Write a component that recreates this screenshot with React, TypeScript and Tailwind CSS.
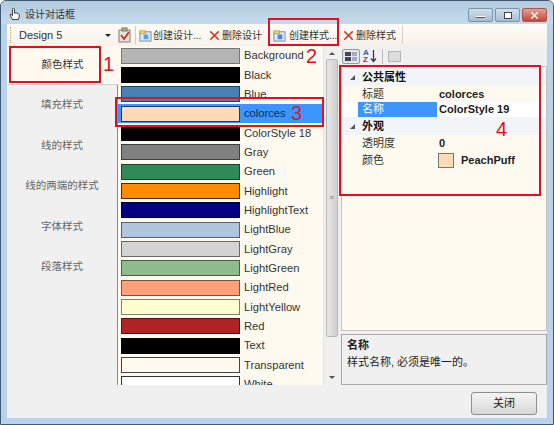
import React from 'react';
import { X } from 'lucide-react';

const font = { cjk: "font-['Liberation_Sans','Noto_Sans_CJK_SC',sans-serif]" };

const colors = [
  { name: 'Background', fill: 'bg-[#b5b5b5]', border: 'border-[#777]' },
  { name: 'Black', fill: 'bg-black', border: 'border-black' },
  { name: 'Blue', fill: 'bg-[#4682b4]', border: 'border-[#22425c]' },
  { name: 'colorces', fill: 'bg-[#ffdab9]', border: 'border-[#1c3c66]', selected: true },
  { name: 'ColorStyle 18', fill: 'bg-black', border: 'border-black' },
  { name: 'Gray', fill: 'bg-[#808080]', border: 'border-[#404040]' },
  { name: 'Green', fill: 'bg-[#2e8b57]', border: 'border-[#17452b]' },
  { name: 'Highlight', fill: 'bg-[#ff8c00]', border: 'border-[#4a2c08]' },
  { name: 'HighlightText', fill: 'bg-[#000080]', border: 'border-[#000040]' },
  { name: 'LightBlue', fill: 'bg-[#b0c4de]', border: 'border-[#58626f]' },
  { name: 'LightGray', fill: 'bg-[#d3d3d3]', border: 'border-[#6a6a6a]' },
  { name: 'LightGreen', fill: 'bg-[#8fbc8f]', border: 'border-[#485e48]' },
  { name: 'LightRed', fill: 'bg-[#ffa07a]', border: 'border-[#80503d]' },
  { name: 'LightYellow', fill: 'bg-[#ffffd0]', border: 'border-[#807f68]' },
  { name: 'Red', fill: 'bg-[#b22222]', border: 'border-[#591111]' },
  { name: 'Text', fill: 'bg-black', border: 'border-black' },
  { name: 'Transparent', fill: 'bg-[#fffaf0]', border: 'border-[#444]' },
  { name: 'White', fill: 'bg-white', border: 'border-[#333]' },
];

const tabs = ['填充样式', '线的样式', '线的两端的样式', '字体样式', '段落样式'];

const HandIcon = () => (
  <svg width="12" height="14" viewBox="0 0 14 15" fill="#fff" stroke="#222" strokeWidth="1">
    <path d="M4 14 L1.5 9 Q1 7.5 2.5 7.8 L4 9.5 V2.5 Q4 1 5.2 1 Q6.4 1 6.4 2.5 V6.5 Q8.5 5.8 11 7 Q12.5 7.8 12 10 L11 14 Z" />
  </svg>
);

const ClipboardIcon = () => (
  <svg width="15" height="16" viewBox="0 0 15 16">
    <rect x="2" y="3" width="11" height="12" fill="#e9e4da" stroke="#8a7f70" />
    <rect x="5" y="1" width="5" height="3" fill="#b9b2a4" stroke="#77705f" />
    <path d="M4 8 L7 12 L12 5" fill="none" stroke="#c8342c" strokeWidth="1.8" />
  </svg>
);

const NewDocIcon = ({ accent }: { accent: string }) => (
  <svg width="13" height="13" viewBox="0 0 14 14">
    <rect x="1" y="3" width="12" height="10" fill="#dbe9f6" stroke="#6a8fb2" />
    <rect x="1" y="2" width="6" height="3" fill="#f1d67a" stroke="#c1a246" />
    <rect x="5" y="6" width="5" height="5" fill={accent} />
  </svg>
);

const DeleteIcon = () => <X size={15} strokeWidth={2.6} className="text-[#e0301e] shrink-0" />;

const Divider = () => <div className="w-px h-[18px] bg-[#d3cfc6]" />;

const Arrow = ({ className }: { className: string }) => (
  <svg width="7" height="7" viewBox="0 0 7 7" className={className}>
    <path d="M6 1 V6 H1 Z" fill="#555" />
  </svg>
);

const App: React.FC = () => {
  return (
    <div className={`relative w-[554px] h-[425px] overflow-hidden bg-[#b9d4ea] border border-[#3f5a72] rounded-t-md flex flex-col ${font.cjk}`}>
      {/* Title bar */}
      <div className="h-[23px] shrink-0 flex items-center justify-between pl-[8px] pr-[6px] bg-gradient-to-b from-[#b4c9dc] to-[#c4dbee]">
        <div className="flex items-center gap-[4px] text-[10px] text-[#333] pt-[3px]">
          <HandIcon />
          <span>设计对话框</span>
        </div>
        <div className="flex self-start gap-px">
          <div className="w-[25px] h-[14px] mt-[7px] rounded-[2px] border border-[#7d93a8] bg-gradient-to-b from-[#d2e0ec] to-[#a8bdd0] flex items-end justify-center pb-[3px]">
            <div className="w-[9px] h-[2px] bg-white border-b border-[#556]" />
          </div>
          <div className="w-[25px] h-[14px] mt-[7px] ml-[1px] rounded-[2px] border border-[#7d93a8] bg-gradient-to-b from-[#d2e0ec] to-[#a8bdd0] flex items-center justify-center">
            <div className="w-[8px] h-[7px] border border-[#445] bg-white" />
          </div>
          <div className="w-[25px] h-[14px] mt-[7px] ml-[1px] rounded-[2px] border border-[#a05a50] bg-gradient-to-b from-[#e0a094] to-[#c2473a] flex items-center justify-center">
            <X size={11} strokeWidth={3} className="text-white" />
          </div>
        </div>
      </div>

      <div className="flex-1 mx-[6px] mb-[6px] bg-[#f0f0f0] flex flex-col min-h-0">
        {/* Toolbar */}
        <div className="h-[22px] shrink-0 flex items-center bg-gradient-to-b from-[#fefcf8] to-[#f6f2ea] text-[10px] text-[#333]">
          <div className="w-[3px] h-[16px] ml-[3px] border-l border-dotted border-[#c9a46a]" />
          <div className="w-[99px] flex items-center justify-between pl-[6px] pr-px text-[11px]">
            <span>Design 5</span>
            <span className="w-0 h-0 border-x-[3px] border-x-transparent border-t-[3px] border-t-[#222]" />
          </div>
          <div className="ml-[5px]"><ClipboardIcon /></div>
          <div className="ml-[3px] mr-[3px]"><Divider /></div>
          <div className="flex items-center gap-[1px] w-[68px]">
            <NewDocIcon accent="#5fa0d8" />
            <span className="whitespace-nowrap">创建设计...</span>
          </div>
          <div className="flex items-center w-[66px]">
            <DeleteIcon />
            <span className="whitespace-nowrap">删除设计</span>
          </div>
          <div className="flex items-center gap-[3px] w-[68px]">
            <NewDocIcon accent="#4b86c8" />
            <span className="whitespace-nowrap">创建样式...</span>
          </div>
          <div className="flex items-center w-[61px]">
            <DeleteIcon />
            <span className="whitespace-nowrap">删除样式</span>
          </div>
          <Divider />
        </div>

        <div className="flex h-[339px] shrink-0">
          {/* Left tabs */}
          <div className="w-[111px] shrink-0 flex flex-col text-[10.5px] text-[#666]">
            <div className="h-[39px] shrink-0 flex items-center justify-center bg-[#fffaf0] text-[#333] border-b border-[#d0d0d0]">颜色样式</div>
            {tabs.map((t) => (
              <div key={t} className="h-[40.5px] shrink-0 flex items-center justify-center border-r border-[#8a8a8a]">{t}</div>
            ))}
            <div className="flex-1 border-r border-[#8a8a8a]" />
          </div>

          {/* Color list + scrollbar */}
          <div className="w-[221px] shrink-0 flex bg-[#fffaf0] overflow-hidden">
            <div className="w-[205px] shrink-0 flex flex-col overflow-hidden pl-[3px]">
              {colors.map((c) => (
                <div key={c.name} className={`h-[19.33px] shrink-0 flex items-center gap-[4px] text-[11.2px] ${c.selected ? 'bg-[#3d95ff] -ml-[3px] pl-[3px] text-[#0c2a55]' : 'text-[#333]'}`}>
                  <div className={`w-[119px] h-[16px] shrink-0 border ${c.fill} ${c.border}`} />
                  <span className="whitespace-nowrap">{c.name}</span>
                </div>
              ))}
            </div>
            <div className="flex-1 bg-[#f0f0f0] flex flex-col items-center py-[3px] border-l border-[#e4e4e4]">
              <span className="w-0 h-0 border-x-[3px] border-x-transparent border-b-[3px] border-b-[#555] mt-[3px]" />
              <div className="w-[12px] h-[278px] mt-[4px] rounded-[2px] bg-gradient-to-r from-[#e6e6e6] to-[#cfcfcf] border border-[#b8b8b8] flex items-center justify-center text-[7px] text-[#777]">≡</div>
              <span className="w-0 h-0 border-x-[3px] border-x-transparent border-t-[3px] border-t-[#555] mt-auto mb-[3px]" />
            </div>
          </div>

          {/* Right: property grid */}
          <div className="flex-1 flex flex-col ml-[2px] min-w-0">
            <div className="h-[20px] shrink-0 flex items-center gap-[3px] pl-[1px]">
              <div className="w-[18px] h-[15px] rounded-[2px] border border-[#9a9a9a] bg-[#dfe6ee] grid grid-cols-2 gap-[1px] p-[2px]">
                <span className="bg-[#445]" /><span className="bg-[#aab]" /><span className="bg-[#445]" /><span className="bg-[#aab]" />
              </div>
              <div className="w-[15px] flex items-center">
                <div className="w-[7px] text-[8px] leading-[7px] font-bold text-[#2a5db0]">
                  A<br /><span className="text-[#b02a2a]">Z</span>
                </div>
                <svg width="7" height="14" viewBox="0 0 7 14" fill="none" stroke="#333" strokeWidth="1.2">
                  <path d="M3.5 1 V12 M1 9.5 L3.5 12.5 L6 9.5" />
                </svg>
              </div>
              <div className="w-px h-[15px] bg-[#bbb] ml-[1px]" />
              <div className="w-[13px] h-[11px] ml-[2px] border border-[#b5b5b5] bg-[#dcdcdc]" />
            </div>
            <div className="h-[265px] shrink-0 border border-[#c4c4c4] bg-[#fffaf0] text-[11px] text-[#333] pt-[2px]">
              <div className="h-[17px] flex items-center bg-[#f2f5f8] font-bold">
                <Arrow className="ml-[7px] mr-[6px]" />
                <span className="text-[#111]">公共属性</span>
              </div>
              <div className="h-[16px] flex items-center pl-[20px]">
                <span className="w-[77px]">标题</span>
                <span className="font-bold text-[#222]">colorces</span>
              </div>
              <div className="h-[15px] flex items-center pl-[16px] bg-white">
                <span className="w-[79px] h-full flex items-center pl-[4px] bg-[#3d95ff] text-white">名称</span>
                <span className="font-bold text-[#222] pl-[2px]">ColorStyle 19</span>
              </div>
              <div className="h-[18px] flex items-center bg-[#f2f5f8] font-bold">
                <Arrow className="ml-[7px] mr-[6px]" />
                <span className="text-[#111]">外观</span>
              </div>
              <div className="h-[17px] flex items-center pl-[20px]">
                <span className="w-[77px]">透明度</span>
                <span className="font-bold text-[#222]">0</span>
              </div>
              <div className="h-[17px] flex items-center pl-[20px]">
                <span className="w-[76px]">颜色</span>
                <span className="w-[16px] h-[15px] bg-[#ffdab9] border border-[#777]" />
                <span className="font-bold text-[#222] ml-[7px]">PeachPuff</span>
              </div>
            </div>
            <div className="h-[51px] shrink-0 mt-[3px] border border-[#a8a8a8] bg-[#f0f0f0] px-[5px] py-[2px] text-[11px] leading-[17px] text-[#222]">
              <div className="font-bold">名称</div>
              <div>样式名称, 必须是唯一的。</div>
            </div>
          </div>
        </div>

        {/* Footer */}
        <div className="flex-1 flex items-start justify-end pr-[10px] pt-[7px]">
          <button className="w-[66px] h-[23px] rounded-[3px] border border-[#8e8e8e] bg-gradient-to-b from-[#f4f4f4] to-[#d8d8d8] text-[11px] text-[#222]">关闭</button>
        </div>
      </div>

      {/* Red annotation boxes */}
      <div className="absolute left-[8px] top-[45px] w-[92px] h-[37px] border-[2px] border-[#e0101c]" />
      <div className="absolute left-[267px] top-[17px] w-[71px] h-[28px] border-[2px] border-[#e0101c]" />
      <div className="absolute left-[114px] top-[96px] w-[209px] h-[30px] border-[2px] border-[#e0101c]" />
      <div className="absolute left-[338px] top-[64px] w-[202px] h-[131px] border-[2px] border-[#e0101c]" />
      <span className="absolute left-[102px] top-[51px] text-[20px] leading-[24px] text-[#e0101c]">1</span>
      <span className="absolute left-[305px] top-[43px] text-[20px] leading-[24px] text-[#e0101c]">2</span>
      <span className="absolute left-[290px] top-[100px] text-[20px] leading-[24px] text-[#d0202c]">3</span>
      <span className="absolute left-[495px] top-[116px] text-[20px] leading-[24px] text-[#e0101c]">4</span>
    </div>
  );
};

export default App;
